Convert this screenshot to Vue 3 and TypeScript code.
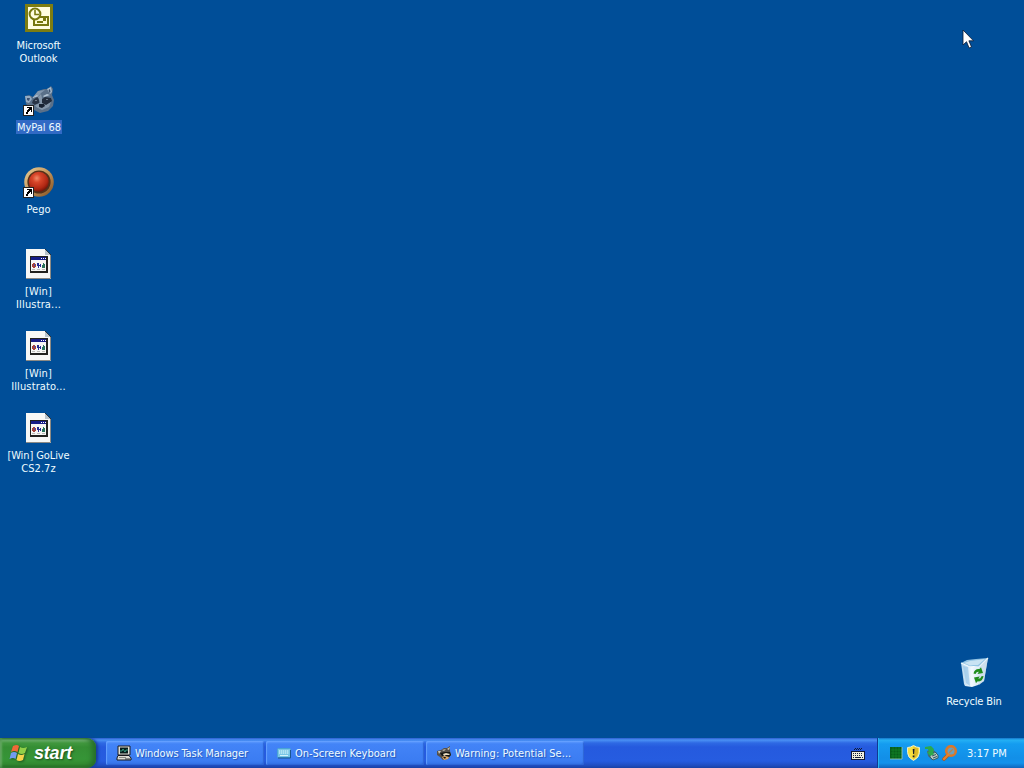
<template>
  <div class="screen">
    <main class="desktop">
      <div class="icon-column">
        <div v-for="item in icons" :key="item.id" class="desktop-icon">
          <!-- Outlook -->
          <svg v-if="item.kind === 'outlook'" class="picture" viewBox="0 0 32 32">
            <rect x="2" y="2" width="28" height="28" fill="#7d7d12" />
            <rect x="5" y="5" width="22" height="22" fill="#fffde0" />
            <rect x="11" y="15" width="14" height="8" fill="#fffbd0" stroke="#77780f" stroke-width="2" />
            <path d="M14 19h6v2h-6zM20 16h3v3h-3z" fill="#77780f" />
            <circle cx="12" cy="12" r="5.400" fill="#fffce0" stroke="#77780f" stroke-width="2" />
            <path d="M12 8v4.500h4" fill="none" stroke="#77780f" stroke-width="1.600" />
          </svg>

          <!-- Raccoon -->
          <svg v-else-if="item.kind === 'raccoon'" class="picture" viewBox="0 0 32 32">
            <path d="M2 12l4-1 4 2 5-6 6-2 3 0 4-3 2 3-1 6 2 5-1 6-5 5-8 2-8-4-6-5z" fill="#5a7089" />
            <path d="M2 12l5 0 2 3-3 4-3-1z" fill="#93abc3" />
            <path d="M4 14l3 0-1 3-2-1z" fill="#3b5274" />
            <path d="M24 5l4-2 1 5-2 2z" fill="#a5bace" />
            <path d="M25.500 6l1.500-1 .5 3-1 1z" fill="#3a4d68" />
            <path d="M11 12l4-5 7-1-4 3-4 5z" fill="#8297ae" />
            <path d="M10 16l4-3 3 2-1 4-4 2-3-2z" fill="#2a3547" />
            <path d="M18 16l4-3 6 1 1 3-5 4-5 1z" fill="#222c3c" />
            <path d="M15 13l3-3 1 4 0 5 4 2 5-3-2 5-7 3-6-3-1-2 5-2z" fill="#8496a9" />
            <path d="M16 20l5 0 1 2-3 2-3-1z" fill="#172131" />
            <path d="M10 13l4-2 1 1-5 2zM20 12l4-2 3 1-6 2z" fill="#b4c5d6" />
            <circle cx="13" cy="16.500" r=".6" fill="#c5d2de" />
            <circle cx="24" cy="15.500" r=".6" fill="#c5d2de" />
          </svg>

          <!-- Pego -->
          <svg v-else-if="item.kind === 'pego'" class="picture" viewBox="0 0 32 32">
            <defs>
              <radialGradient id="pegoRed" cx=".4" cy=".32" r=".7">
                <stop offset="0" stop-color="#f08a68" />
                <stop offset=".3" stop-color="#d8462a" />
                <stop offset=".75" stop-color="#b12814" />
                <stop offset="1" stop-color="#701408" />
              </radialGradient>
              <linearGradient id="pegoRim" x1="0" y1="0" x2="1" y2="1">
                <stop offset="0" stop-color="#e8cf98" />
                <stop offset=".5" stop-color="#c4955a" />
                <stop offset="1" stop-color="#7c4a1c" />
              </linearGradient>
            </defs>
            <circle cx="16" cy="16" r="14.800" fill="url(#pegoRim)" />
            <circle cx="16" cy="16" r="11.600" fill="#54301a" />
            <circle cx="15.800" cy="15.800" r="10" fill="url(#pegoRed)" />
          </svg>

          <!-- Generic program file -->
          <svg v-else class="picture" viewBox="0 0 32 32">
            <path d="M3 1h19l6 6v24H3z" fill="#f8f8f6" />
            <path d="M3 30.500h24.500V7" fill="none" stroke="#8d8a84" />
            <path d="M22 1v6h6z" fill="#b9c4cc" />
            <path d="M22 1l6 6" stroke="#29333b" />
            <g shape-rendering="crispEdges">
              <rect x="7" y="8" width="18" height="17" fill="#22221f" />
              <rect x="8" y="9" width="15" height="14" fill="#f7f7f4" />
              <rect x="8" y="9" width="15" height="3" fill="#171d86" />
              <path d="M18 10h1v1h-1zM20 10h1v1h-1zM22 10h1v1h-1z" fill="#fff" />
              <path d="M10 15h2v1h1v3h-1v1h-2v-1H9v-3h1z" fill="#a8423a" />
              <path d="M11 16h1v2h-1z" fill="#4450b0" />
              <path d="M14 15h2v2h1v-1h1v3h-1v-1h-1v2h-1v-2h-1z" fill="#252b92" />
              <path d="M20 15h1v1h1v4h-3v-3h1z" fill="#28735c" />
              <path d="M9 21h3v1H9zM14 21h3v1h-3zM19 21h3v1h-3z" fill="#bcbcb8" />
            </g>
          </svg>

          <svg v-if="item.shortcut" class="shortcut" viewBox="0 0 11 11" shape-rendering="crispEdges">
            <path d="M0 0h11v11H0z" fill="#222" />
            <path d="M1 1h9v9H1z" fill="#fff" />
            <path d="M4 2h5v5H8V5H7V6H6V7H5V9H3V7H4V5H5V4H6V3H4z" fill="#000" />
          </svg>

          <div class="label" :class="{ selected: item.selected }">
            <span
              v-for="line in item.lines"
              :key="line.text"
              :style="{ letterSpacing: line.spacing + 'px' }"
            >{{ line.text }}</span>
          </div>
        </div>
      </div>

      <div class="desktop-icon recycle">
        <svg class="picture" viewBox="0 0 32 32">
          <defs>
            <linearGradient id="binBody">
              <stop offset="0" stop-color="#b5d6ee" />
              <stop offset=".4" stop-color="#f2f9fe" />
              <stop offset="1" stop-color="#b9d3e6" />
            </linearGradient>
          </defs>
          <path d="M3 6l7 3 11 1 9-9-4 23-6 4-6 2-7-1-1-2z" fill="url(#binBody)" />
          <path d="M3 6l6-3 9-1 12-1-9 9-11-1z" fill="#93c4e4" />
          <path d="M6 6l6-2 8-1 7-1-7 6-9 0z" fill="#c9e3f3" />
          <path d="M3 6l7 3 11 1 9-9" fill="none" stroke="#f5fcff" stroke-width="1.200" />
          <path d="M21 10l9-9-4 23-5 4z" fill="#cfe0ec" opacity=".7" />
          <path d="M5 9l3 17 4 3-2-19z" fill="#8fc2e6" opacity=".6" />
          <path d="M15.500 16.500q1-5 6-4.500l1.500-1.800 2 5.800-5.500 1 1.300-2.300q-2.300-.3-3.300 2.300z" fill="#1f8d1c" />
          <path d="M25.500 19q-.5 5.500-6.200 5.500l-1.300 1.800-2-5.800 5.700-1-1.400 2.300q2.400 0 3.200-2.600z" fill="#1f8d1c" />
        </svg>
        <div class="label"><span>Recycle Bin</span></div>
      </div>

      <svg class="cursor" viewBox="0 0 12 21">
        <path d="M1 1v15l3.500-3.300 2.600 6.300 2.400-1-2.600-6.200h4.600z" fill="#fff" stroke="#0b1830" stroke-width=".8" />
      </svg>
    </main>

    <footer class="taskbar">
      <button class="start" type="button">
        <svg class="flag" viewBox="0 0 20 20">
          <path d="M4 3q4-2 6 0L8.500 9Q5 7 2 9z" fill="#ef6938" />
          <path d="M11 4q3 2 7 0l-2 6q-3 2-6.500 0z" fill="#91cf48" />
          <path d="M2 10q3-2 6 0l-1.500 6Q4 14 .5 16z" fill="#729cf0" />
          <path d="M9 11q3 2 6.500 0L14 17q-4 2-6.500 0z" fill="#f5d34b" />
        </svg>
        <span>start</span>
      </button>

      <nav class="tasks">
        <button v-for="task in tasks" :key="task.title" class="task" type="button">
          <svg v-if="task.icon === 'monitor'" class="task-icon" viewBox="0 0 16 16">
            <path d="M2 1h12v9H2z" fill="#e2e0d4" stroke="#181b22" />
            <path d="M4 2.500h8v6H4z" fill="#061c1c" />
            <path d="M4 6h2l1-2 2 3 1-2h2" fill="none" stroke="#40b695" stroke-width=".8" />
            <path d="M2 10.500h11l2 2.500v2H1v-2z" fill="#deddd5" stroke="#17191d" />
            <path d="M3 12.500h7" stroke="#8b8b84" />
            <path d="M9 14h5" stroke="#33373c" />
          </svg>
          <svg v-else-if="task.icon === 'keyboard'" class="task-icon" viewBox="0 0 16 16">
            <rect x="1.500" y="3.500" width="13" height="9" rx="1" fill="#78c5e6" stroke="#4aa4d4" />
            <path d="M2 13h12.500V5" fill="none" stroke="#1b558f" />
            <path d="M3 6h10M3 8h10" stroke="#e7ffff" stroke-dasharray="1.400 .6" />
            <path d="M4 10.500h8" stroke="#d4f4fa" />
          </svg>
          <svg v-else class="task-icon" viewBox="0 0 16 16">
            <path d="M1 6l4-1 3-2 3 0 3-2 0 5 1 4-3 4-5 1-3-3-3-2z" fill="#55504a" />
            <path d="M2 6l3 0-2 3zM6 5l4-1-2 2zM11 4l3-2-1 3z" fill="#c8c6b9" />
            <path d="M4 8l5-1 5 0 1 3-2 2-4-1-3 0z" fill="#141715" />
            <path d="M7 9l3-1 4 1-1 1-3 0-2 1z" fill="#e9dcc0" />
            <path d="M6 12l3-1 4 1-1 2-4 1z" fill="#dba868" />
            <path d="M7 12h3l-1 2z" fill="#171511" />
          </svg>
          <span :style="{ letterSpacing: task.spacing + 'px' }">{{ task.title }}</span>
        </button>
      </nav>

      <svg class="language" viewBox="0 0 14 13" shape-rendering="crispEdges">
        <path d="M3 2h1v1H3zM4 1h1v1H4zM5 2h1v1H5zM6 1h1v1H6zM7 2h1v1H7zM8 1h1v1H8zM9 2h1v1H9zM10 1h1v1h-1z" fill="#111b35" />
        <path d="M0 4h14v9H0z" fill="#101938" />
        <path d="M1 5h12v7H1z" fill="#eeeede" />
        <path d="M2 6.500h10M2 8.500h10" stroke="#16203a" stroke-dasharray="1 1" />
        <path d="M2 10h1v1H2zM4 10h6v1H4zM11 10h1v1h-1z" fill="#16203a" />
      </svg>

      <div class="tray">
        <div class="tray-icons">
          <svg viewBox="0 0 16 16">
            <path d="M2 2h12v12H2z" fill="#075e1b" />
            <path d="M3 5h11M3 8h11M3 11h11M5 2v12M8 2v12M11 2v12" stroke="#148c2a" stroke-width=".6" />
            <path d="M2 14h12V2" fill="none" stroke="#a4ceb4" stroke-width=".8" />
          </svg>
          <svg viewBox="0 0 16 16">
            <path d="M7.500 .5q3 2 6 2v5q0 5-6 8-6-3-6-8v-5q3 0 6-2z" fill="#f8e040" stroke="#e9edcf" />
            <path d="M7.500 2q3 1 4.500 1v5q0 3-4.500 6z" fill="#dcb928" />
            <path d="M6.700 4h1.800l-.4 5h-1zM6.700 10.500h1.700v1.700H6.700z" fill="#18202b" />
          </svg>
          <svg viewBox="0 0 16 16">
            <path d="M3 6l5-2 5 4 0 4-5 3-4-4z" fill="#486d74" />
            <path d="M6 9l5-2 3 3 0 3-5 2-3-3z" fill="#bac9c3" stroke="#325f69" />
            <path d="M1 2l6-1 3 3-1 4 2 1-5 2-3-4 2 0-1-3-3 0z" fill="#2ba84c" />
            <path d="M8 11l4-1.500M9 13l4-1.500" stroke="#355563" />
          </svg>
          <svg viewBox="0 0 16 16">
            <path d="M2 14l4.500-4.500" stroke="#a8561f" stroke-width="3.600" stroke-linecap="round" />
            <circle cx="9" cy="6" r="4.800" fill="#6aa0bd" stroke="#d9782a" stroke-width="2.600" />
            <path d="M2 14l4.500-4.500" stroke="#e5822c" stroke-width="2.400" stroke-linecap="round" />
            <path d="M7 8l4-4" stroke="#b88350" stroke-width="1.200" />
          </svg>
        </div>
        <time>3:17 PM</time>
      </div>
    </footer>
  </div>
</template>

<script setup lang="ts">
interface LabelLine {
  text: string
  spacing: number
}

interface DesktopItem {
  id: number
  kind: 'outlook' | 'raccoon' | 'pego' | 'file'
  lines: LabelLine[]
  shortcut?: boolean
  selected?: boolean
}

interface Task {
  title: string
  icon: 'monitor' | 'keyboard' | 'raccoon'
  spacing: number
}

const icons: DesktopItem[] = [
  { id: 1, kind: 'outlook', lines: [{ text: 'Microsoft', spacing: -0.1 }, { text: 'Outlook', spacing: -0.1 }] },
  { id: 2, kind: 'raccoon', lines: [{ text: 'MyPal 68', spacing: -0.05 }], shortcut: true, selected: true },
  { id: 3, kind: 'pego', lines: [{ text: 'Pego', spacing: 0 }], shortcut: true },
  { id: 4, kind: 'file', lines: [{ text: '[Win]', spacing: 0.1 }, { text: 'Illustra...', spacing: 0.15 }] },
  { id: 5, kind: 'file', lines: [{ text: '[Win]', spacing: 0.1 }, { text: 'Illustrato...', spacing: 0.12 }] },
  { id: 6, kind: 'file', lines: [{ text: '[Win] GoLive', spacing: -0.1 }, { text: 'CS2.7z', spacing: 0.05 }] },
]

const tasks: Task[] = [
  { title: 'Windows Task Manager', icon: 'monitor', spacing: -0.1 },
  { title: 'On-Screen Keyboard', icon: 'keyboard', spacing: -0.02 },
  { title: 'Warning: Potential Se...', icon: 'raccoon', spacing: 0.04 },
]
</script>

<style>
body {
  margin: 0;
  overflow: hidden;
}
</style>

<style scoped>
.screen {
  display: flex;
  flex-direction: column;
  width: 1024px;
  height: 768px;
  background: #004e98;
  color: #effcff;
  font-family: "DejaVu Sans Condensed", "DejaVu Sans", sans-serif;
  font-stretch: condensed;
  font-size: 11px;
  cursor: default;
}

.desktop {
  position: relative;
  flex: 1;
}

.icon-column {
  width: 78px;
  padding-top: 2px;
}

.desktop-icon {
  position: relative;
  display: flex;
  flex-direction: column;
  align-items: center;
  width: 78px;
  height: 82px;
}

.picture {
  width: 32px;
  height: 32px;
  flex: none;
}

.shortcut {
  position: absolute;
  left: 23px;
  top: 21px;
  width: 11px;
  height: 11px;
}

.label {
  display: flex;
  flex-direction: column;
  align-items: center;
  margin-top: 4px;
  margin-right: 1px;
  padding: 1px 1px 0;
  line-height: 13px;
  letter-spacing: -0.15px;
  white-space: nowrap;
}

.label.selected {
  margin-right: 0;
  background: #316ac5;
}

.recycle {
  position: absolute;
  left: 935px;
  top: 657px;
}

.recycle .label {
  margin-top: 5px;
  margin-right: 0;
}

.cursor {
  position: absolute;
  left: 962px;
  top: 29px;
  width: 12px;
  height: 21px;
}

.taskbar {
  display: flex;
  align-items: stretch;
  height: 30px;
  background: linear-gradient(#2c5ed0 0, #4a91f4 2px, #2e69e4 5px, #255ade 9px, #265ce0 23px, #214fc4 27px, #1941a5 30px);
}

.start {
  display: flex;
  align-items: center;
  width: 96px;
  padding: 0 0 1px 9px;
  border: 0;
  border-radius: 0 9px 9px 0;
  background: linear-gradient(#2c702d 0, #74b475 2px, #42983f 5px, #358e34 9px, #369537 21px, #338b31 26px, #226b22 30px);
  box-shadow: inset -4px 0 5px #276f2a, inset 2px 0 2px #64a761, 2px 0 3px #183d96;
  color: #fff;
}

.flag {
  width: 20px;
  height: 20px;
  filter: drop-shadow(1px 1px 1px #1f5720);
}

.start span {
  margin-left: 5px;
  font: italic bold 18px "Liberation Sans", sans-serif;
  line-height: 28px;
  letter-spacing: -0.2px;
  text-shadow: 1px 1px 2px #1c4c1c;
}

.tasks {
  display: flex;
  gap: 2px;
  padding: 3px 0 3px 10px;
}

.task {
  display: flex;
  align-items: center;
  box-sizing: border-box;
  width: 158px;
  height: 24px;
  padding: 0 0 0 10px;
  border: 0;
  border-radius: 2px;
  background: linear-gradient(#5e9cff 0, #4384f7 3px, #3b7cf2 20px, #3370e4 24px);
  box-shadow: inset 1px 1px 1px #64a0ff, inset -1px -1px 1px #2d65d5;
  color: #effcff;
  font: inherit;
  text-shadow: 1px 1px 1px #2353b4;
  white-space: nowrap;
}

.task-icon {
  width: 16px;
  height: 16px;
  margin-right: 3px;
  flex: none;
}

.language {
  width: 14px;
  height: 13px;
  margin: 9px 12px 0 auto;
}

.tray {
  display: flex;
  align-items: center;
  box-sizing: border-box;
  width: 147px;
  padding-left: 10px;
  border-left: 1px solid #103a92;
  background: linear-gradient(#1675c9 0, #24b0f4 2px, #149cf0 6px, #128fe8 20px, #1292ec 25px, #0f65bc 30px);
  box-shadow: inset 1px 0 0 #27b5f3;
}

.tray-icons {
  display: flex;
  gap: 2px;
}

.tray svg {
  width: 16px;
  height: 16px;
}

.tray time {
  margin-left: 9px;
}
</style>
